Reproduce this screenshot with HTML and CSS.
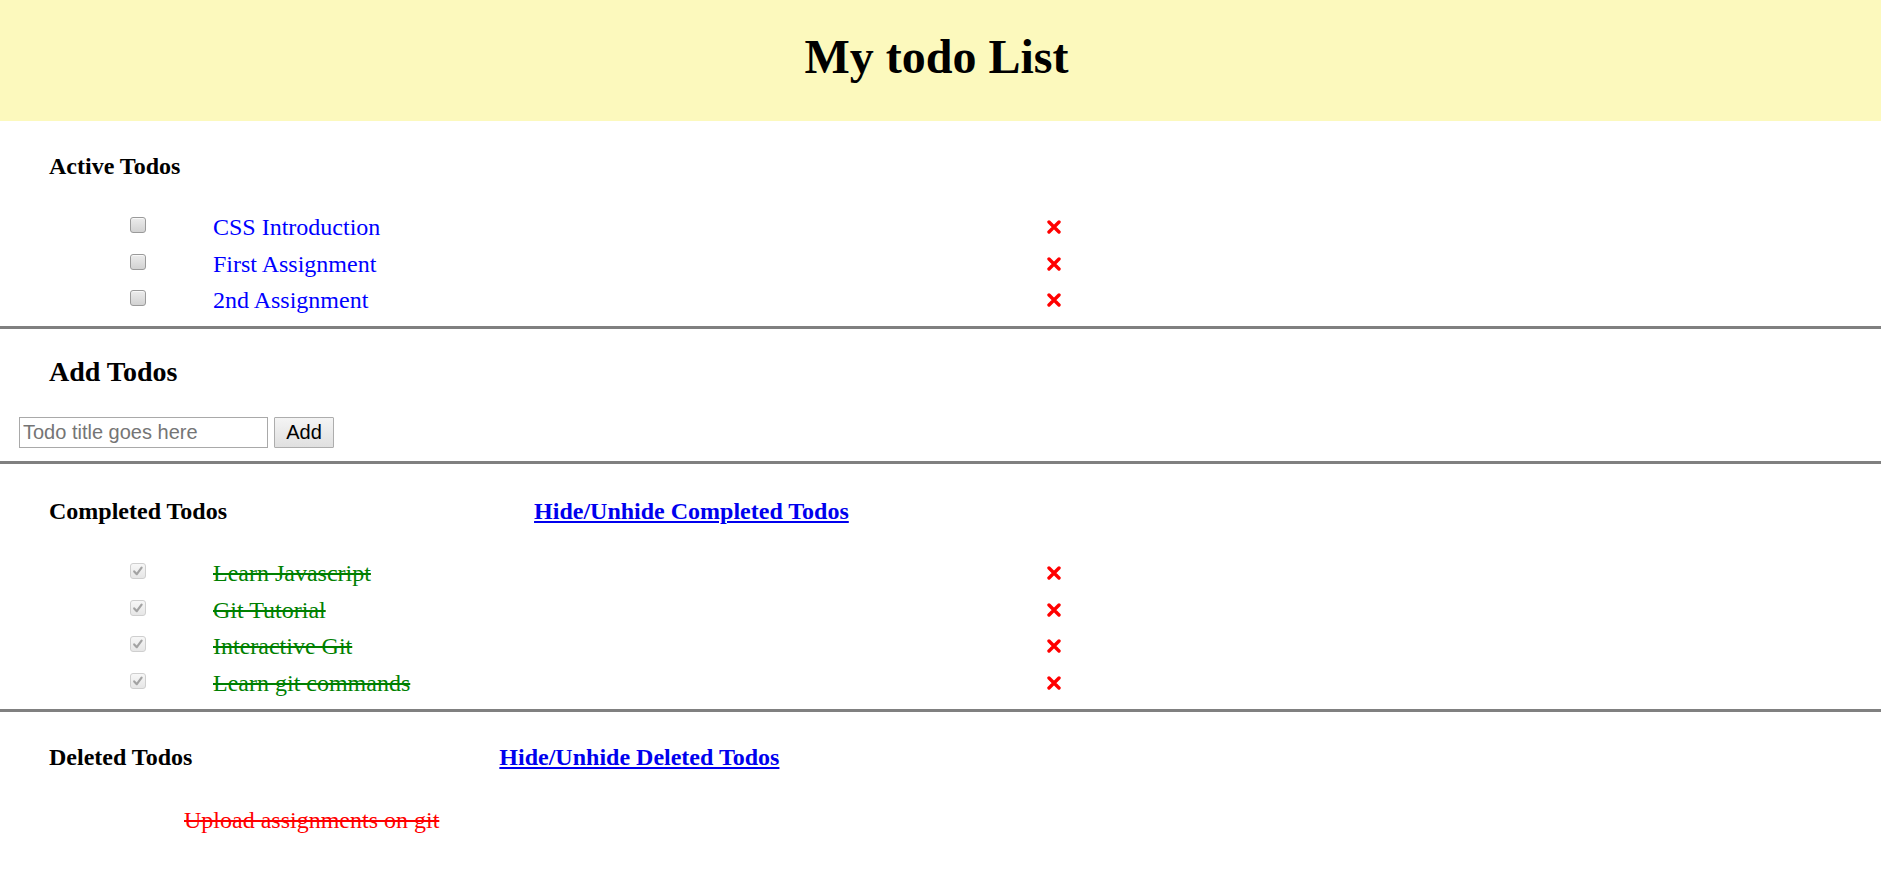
FILE: index.html
```html
<!DOCTYPE html>
<html lang="en">
<head>
<meta charset="utf-8">
<title>My todo List</title>
<link rel="stylesheet" href="styles.css">
</head>
<body>
<header class="banner">
  <h1 class="banner-title">My todo List</h1>
</header>

<main>
  <section class="panel panel-active">
    <div class="panel-head">
      <h3 class="panel-title">Active Todos</h3>
    </div>
    <ul class="todo-list">
      <li class="todo">
        <label class="check"><input class="box" type="checkbox"></label>
        <span class="todo-title is-active">CSS Introduction</span>
        <span class="todo-del"><svg viewBox="0 0 14 14" width="14" height="14"><path d="M2 2 L12 12 M12 2 L2 12" stroke="#ff0000" stroke-width="3.4" stroke-linecap="round" fill="none"/></svg></span>
      </li>
      <li class="todo">
        <label class="check"><input class="box" type="checkbox"></label>
        <span class="todo-title is-active">First Assignment</span>
        <span class="todo-del"><svg viewBox="0 0 14 14" width="14" height="14"><path d="M2 2 L12 12 M12 2 L2 12" stroke="#ff0000" stroke-width="3.4" stroke-linecap="round" fill="none"/></svg></span>
      </li>
      <li class="todo">
        <label class="check"><input class="box" type="checkbox"></label>
        <span class="todo-title is-active">2nd Assignment</span>
        <span class="todo-del"><svg viewBox="0 0 14 14" width="14" height="14"><path d="M2 2 L12 12 M12 2 L2 12" stroke="#ff0000" stroke-width="3.4" stroke-linecap="round" fill="none"/></svg></span>
      </li>
    </ul>
  </section>

  <hr class="rule">

  <section class="panel panel-add">
    <h2 class="add-title">Add Todos</h2>
    <form class="add-form" onsubmit="return false">
      <input class="add-input" type="text" placeholder="Todo title goes here">
      <button class="add-btn" type="button">Add</button>
    </form>
  </section>

  <hr class="rule">

  <section class="panel panel-completed">
    <div class="panel-head">
      <h3 class="panel-title">Completed Todos</h3>
      <a class="toggle" href="#">Hide/Unhide Completed Todos</a>
    </div>
    <ul class="todo-list completed-list">
      <li class="todo">
        <label class="check"><input class="box box-done" type="checkbox" checked disabled><svg class="tick" viewBox="0 0 16 16" width="16" height="16"><path d="M4.2 8.4 L6.8 11.2 L11.6 4.6" stroke="#a3a3a3" stroke-width="2.2" fill="none" stroke-linecap="round" stroke-linejoin="round"/></svg></label>
        <span class="todo-title is-done">Learn Javascript</span>
        <span class="todo-del"><svg viewBox="0 0 14 14" width="14" height="14"><path d="M2 2 L12 12 M12 2 L2 12" stroke="#ff0000" stroke-width="3.4" stroke-linecap="round" fill="none"/></svg></span>
      </li>
      <li class="todo">
        <label class="check"><input class="box box-done" type="checkbox" checked disabled><svg class="tick" viewBox="0 0 16 16" width="16" height="16"><path d="M4.2 8.4 L6.8 11.2 L11.6 4.6" stroke="#a3a3a3" stroke-width="2.2" fill="none" stroke-linecap="round" stroke-linejoin="round"/></svg></label>
        <span class="todo-title is-done">Git Tutorial</span>
        <span class="todo-del"><svg viewBox="0 0 14 14" width="14" height="14"><path d="M2 2 L12 12 M12 2 L2 12" stroke="#ff0000" stroke-width="3.4" stroke-linecap="round" fill="none"/></svg></span>
      </li>
      <li class="todo">
        <label class="check"><input class="box box-done" type="checkbox" checked disabled><svg class="tick" viewBox="0 0 16 16" width="16" height="16"><path d="M4.2 8.4 L6.8 11.2 L11.6 4.6" stroke="#a3a3a3" stroke-width="2.2" fill="none" stroke-linecap="round" stroke-linejoin="round"/></svg></label>
        <span class="todo-title is-done">Interactive Git</span>
        <span class="todo-del"><svg viewBox="0 0 14 14" width="14" height="14"><path d="M2 2 L12 12 M12 2 L2 12" stroke="#ff0000" stroke-width="3.4" stroke-linecap="round" fill="none"/></svg></span>
      </li>
      <li class="todo">
        <label class="check"><input class="box box-done" type="checkbox" checked disabled><svg class="tick" viewBox="0 0 16 16" width="16" height="16"><path d="M4.2 8.4 L6.8 11.2 L11.6 4.6" stroke="#a3a3a3" stroke-width="2.2" fill="none" stroke-linecap="round" stroke-linejoin="round"/></svg></label>
        <span class="todo-title is-done">Learn git commands</span>
        <span class="todo-del"><svg viewBox="0 0 14 14" width="14" height="14"><path d="M2 2 L12 12 M12 2 L2 12" stroke="#ff0000" stroke-width="3.4" stroke-linecap="round" fill="none"/></svg></span>
      </li>
    </ul>
  </section>

  <hr class="rule">

  <section class="panel panel-deleted">
    <div class="panel-head">
      <h3 class="panel-title">Deleted Todos</h3>
      <a class="toggle" href="#">Hide/Unhide Deleted Todos</a>
    </div>
    <ul class="todo-list deleted-list">
      <li class="deleted-item"><span class="todo-title is-deleted">Upload assignments on git</span></li>
    </ul>
  </section>
</main>
</body>
</html>
```

FILE: styles.css
```css
html, body {
  margin: 0;
  padding: 0;
  background: #ffffff;
}

body {
  font-family: "Liberation Serif", "Times New Roman", serif;
  color: #000000;
}

/* Banner */
.banner {
  background: #fcf9bd;
  padding: 29px 8px 37px 0;
}

.banner-title {
  margin: 0;
  text-align: center;
  font-size: 48px;
  line-height: 55px;
  font-weight: bold;
}

/* Sections */
.panel {
  padding: 0;
}

.panel-active {
  padding-top: 31.6px;
  padding-bottom: 7.4px;
}

.panel-add {
  padding-top: 27.5px;
  padding-bottom: 13px;
}

.panel-completed {
  padding-top: 33.6px;
  padding-bottom: 8.4px;
}

.panel-deleted {
  padding-top: 31.6px;
}

.panel-head {
  display: flex;
  align-items: baseline;
  gap: 307px;
  padding-left: 49px;
}

.panel-title {
  margin: 0;
  font-size: 24px;
  line-height: 27px;
  font-weight: bold;
}

.toggle {
  font-size: 24px;
  line-height: 27px;
  font-weight: bold;
  color: #0000ee;
  text-decoration: underline;
}

/* Divider */
.rule {
  margin: 0;
  border: 0;
  height: 0;
  border-top: 3px solid #808080;
}

/* Todo lists */
.todo-list {
  list-style: none;
  margin: 29.5px 0 0;
  padding: 0;
}

.completed-list {
  margin-top: 30.5px;
}

.deleted-list {
  margin-top: 30.5px;
}

.todo {
  display: grid;
  grid-template-columns: 83px 834px 14px;
  align-items: start;
  padding-left: 130px;
  height: 36.5px;
}

.deleted-item {
  padding-left: 184px;
  height: 36.5px;
}

.todo-title {
  font-size: 24px;
  line-height: 36.5px;
  white-space: nowrap;
}

.is-active {
  color: #0000ff;
}

.is-done {
  color: #008000;
  text-decoration: line-through;
}

.is-deleted {
  color: #ff0000;
  text-decoration: line-through;
}

.todo-del {
  display: block;
  width: 14px;
  height: 14px;
  margin-top: 11px;
}

.todo-del svg {
  display: block;
}

/* Checkbox */
.check {
  display: grid;
  width: 16px;
  height: 16px;
  margin-top: 8px;
}

.check > * {
  grid-area: 1 / 1;
}

.box {
  appearance: none;
  -webkit-appearance: none;
  margin: 0;
  width: 16px;
  height: 16px;
  box-sizing: border-box;
  border: 1px solid #9a9a9a;
  border-radius: 3px;
  background: linear-gradient(#ececec, #d2d2d2);
  box-shadow: inset 0 1px 0 #f8f8f8;
}

.box-done {
  border-color: #cfcfcf;
  background: linear-gradient(#f7f7f7, #e6e6e6);
  box-shadow: none;
}

.tick {
  display: block;
  pointer-events: none;
}

/* Add form */
.add-title {
  margin: 0;
  padding-left: 49px;
  font-size: 28px;
  line-height: 32px;
  font-weight: bold;
}

.add-form {
  display: flex;
  gap: 6px;
  margin: 28.5px 0 0;
  padding-left: 19px;
}

.add-input {
  box-sizing: border-box;
  width: 249px;
  height: 31px;
  margin: 0;
  padding: 0 3px;
  border: 1px solid #a9a9a9;
  border-radius: 0;
  font-family: "Liberation Sans", Arial, sans-serif;
  font-size: 20px;
  color: #000000;
  background: #ffffff;
  outline: none;
}

.add-input::placeholder {
  color: #757575;
}

.add-btn {
  box-sizing: border-box;
  width: 60px;
  height: 31px;
  margin: 0;
  padding: 0;
  border: 1px solid #adadad;
  border-radius: 1px;
  background: linear-gradient(#f4f4f4, #e0e0e0);
  font-family: "Liberation Sans", Arial, sans-serif;
  font-size: 20px;
  color: #000000;
}
```
